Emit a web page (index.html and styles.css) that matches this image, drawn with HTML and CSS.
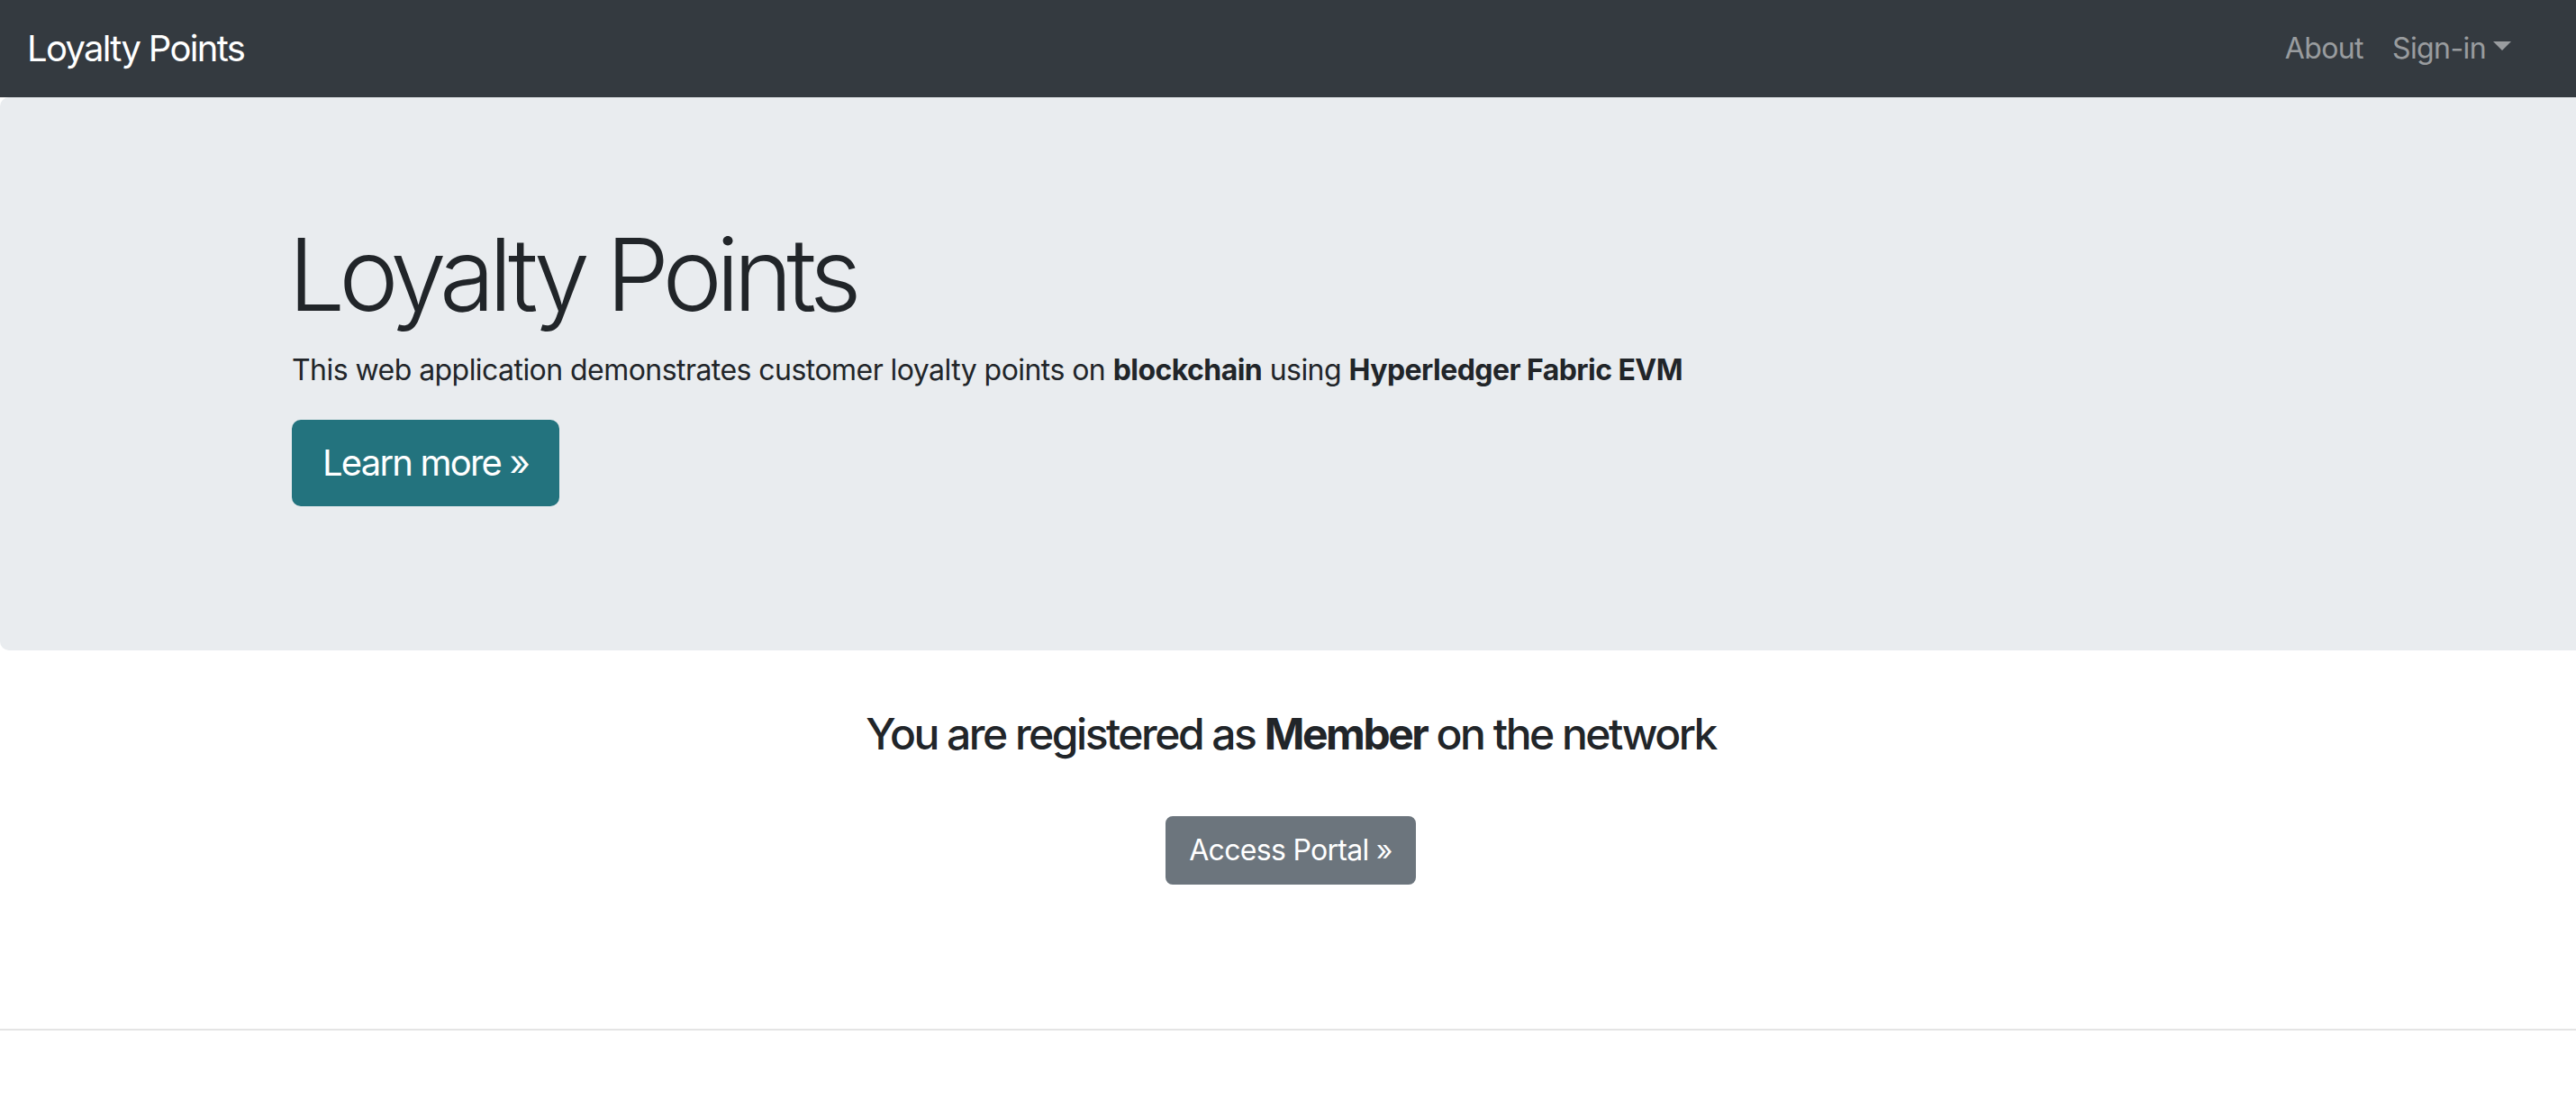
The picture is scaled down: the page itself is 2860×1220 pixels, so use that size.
FILE: index.html
```html
<!DOCTYPE html>
<html lang="en">
<head>
<meta charset="utf-8">
<title>Loyalty Points</title>
<link rel="stylesheet" href="styles.css">
</head>
<body>
<nav class="navbar">
  <a class="brand" href="#">Loyalty Points</a>
  <ul class="nav-links">
    <li><a class="nav-link" href="#">About</a></li>
    <li><a class="nav-link dropdown" href="#">Sign-in<span class="caret"></span></a></li>
  </ul>
</nav>
<header class="jumbotron">
  <div class="container">
    <h1 class="display">Loyalty Points</h1>
    <p class="lead">This web application demonstrates customer loyalty points on <b>blockchain</b> using <b>Hyperledger Fabric EVM</b></p>
    <p class="cta"><a class="btn btn-teal" href="#">Learn more »</a></p>
  </div>
</header>
<main class="registered">
  <h4 class="reg-title">You are registered as <b>Member</b> on the network</h4>
  <a class="btn btn-gray" href="#">Access Portal »</a>
</main>
<hr class="rule">
</body>
</html>
```
FILE: styles.css
```css
html, body {
  margin: 0;
  padding: 0;
}
body {
  font-family: Inter, "Noto Sans", "Liberation Sans", sans-serif;
  color: #212529;
  background: #fff;
  width: 2860px;
  overflow: hidden;
}
a { text-decoration: none; }

.navbar {
  height: 108px;
  background: #343a40;
  display: flex;
  align-items: center;
  padding: 0 56px 0 30px;
  box-sizing: border-box;
}
.brand {
  color: #fff;
  font-size: 40px;
  line-height: 60px;
  letter-spacing: -1.7px;
}
.nav-links {
  list-style: none;
  margin: 0 0 0 auto;
  padding: 0;
  display: flex;
}
.nav-link {
  display: flex;
  align-items: center;
  padding: 0 16px;
  font-size: 32px;
  line-height: 48px;
  color: rgba(255, 255, 255, 0.5);
  letter-spacing: -0.6px;
}
.caret {
  display: inline-block;
  margin-left: 8px;
  margin-top: -6px;
  border-top: 10px solid rgba(255, 255, 255, 0.5);
  border-left: 10px solid transparent;
  border-right: 10px solid transparent;
}

.jumbotron {
  background: #e9ecef;
  border-radius: 10px 0 0 10px;
  padding: 129px 0 32px;
}
.container {
  width: 2280px;
  margin: 0 auto;
  padding: 0 30px;
  box-sizing: border-box;
}
.display {
  font-size: 112px;
  font-weight: 300;
  line-height: 1.2;
  margin: 0 0 16px;
  letter-spacing: -6.9px;
}
.lead {
  font-size: 32px;
  line-height: 48px;
  margin: 0 0 31px 4px;
  font-weight: 400;
  letter-spacing: -0.55px;
}
.lead b { font-weight: 700; }
.cta {
  margin: 0 0 128px;
  line-height: 0;
}

.btn {
  display: inline-block;
  color: #fff;
  border: 2px solid transparent;
  white-space: nowrap;
}
.btn-teal {
  background: #23737e;
  border-color: #23737e;
  font-size: 40px;
  line-height: 60px;
  padding: 16px 32px;
  border-radius: 10px;
  letter-spacing: -1.8px;
  margin-left: 4px;
}
.btn-gray {
  background: #6c757d;
  border-color: #6c757d;
  font-size: 32px;
  line-height: 48px;
  padding: 12px 24px;
  border-radius: 8px;
  letter-spacing: -0.7px;
}

.registered {
  display: flex;
  flex-direction: column;
  align-items: center;
  padding: 64px 0 160px 6px;
}
.reg-title {
  font-size: 48px;
  font-weight: 500;
  line-height: 1.2;
  margin: 0 0 62px;
  letter-spacing: -2.5px;
}
.reg-title b { font-weight: 700; }

.rule {
  margin: 0;
  border: 0;
  border-top: 2px solid #e4e4e4;
}
```
